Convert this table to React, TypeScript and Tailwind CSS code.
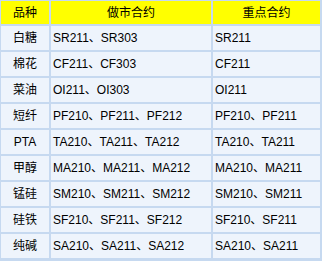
import React from "react";

const rows: [string, string, string][] = [
  ["白糖", "SR211、SR303", "SR211"],
  ["棉花", "CF211、CF303", "CF211"],
  ["菜油", "OI211、OI303", "OI211"],
  ["短纤", "PF210、PF211、PF212", "PF210、PF211"],
  ["PTA", "TA210、TA211、TA212", "TA210、TA211"],
  ["甲醇", "MA210、MA211、MA212", "MA210、MA211"],
  ["锰硅", "SM210、SM211、SM212", "SM210、SM211"],
  ["硅铁", "SF210、SF211、SF212", "SF210、SF211"],
  ["纯碱", "SA210、SA211、SA212", "SA210、SA211"],
];

export default function App() {
  return (
    <div
      className="w-[322px] h-[261px] bg-[#c6d9f0] pt-[1px] pl-[1px] pr-[2px] pb-[3px] grid grid-cols-[48px_160px_107px] grid-rows-[23px_repeat(9,24px)] gap-[2px] text-[12px] text-black leading-none"
      style={{ fontFamily: '"Liberation Sans", Arial, "Noto Sans CJK SC", sans-serif' }}
    >
      <div className="bg-[#ffff00] flex items-center justify-center">品种</div>
      <div className="bg-[#ffff00] flex items-center justify-center">做市合约</div>
      <div className="bg-[#ffff00] flex items-center justify-center">重点合约</div>
      {rows.map((r) => (
        <React.Fragment key={r[0]}>
          <div className="bg-[#eef4fc] flex items-center justify-center">{r[0]}</div>
          <div className="bg-[#eef4fc] flex items-center pl-[2px] whitespace-nowrap">{r[1]}</div>
          <div className="bg-[#eef4fc] flex items-center pl-[2px] whitespace-nowrap">{r[2]}</div>
        </React.Fragment>
      ))}
    </div>
  );
}
